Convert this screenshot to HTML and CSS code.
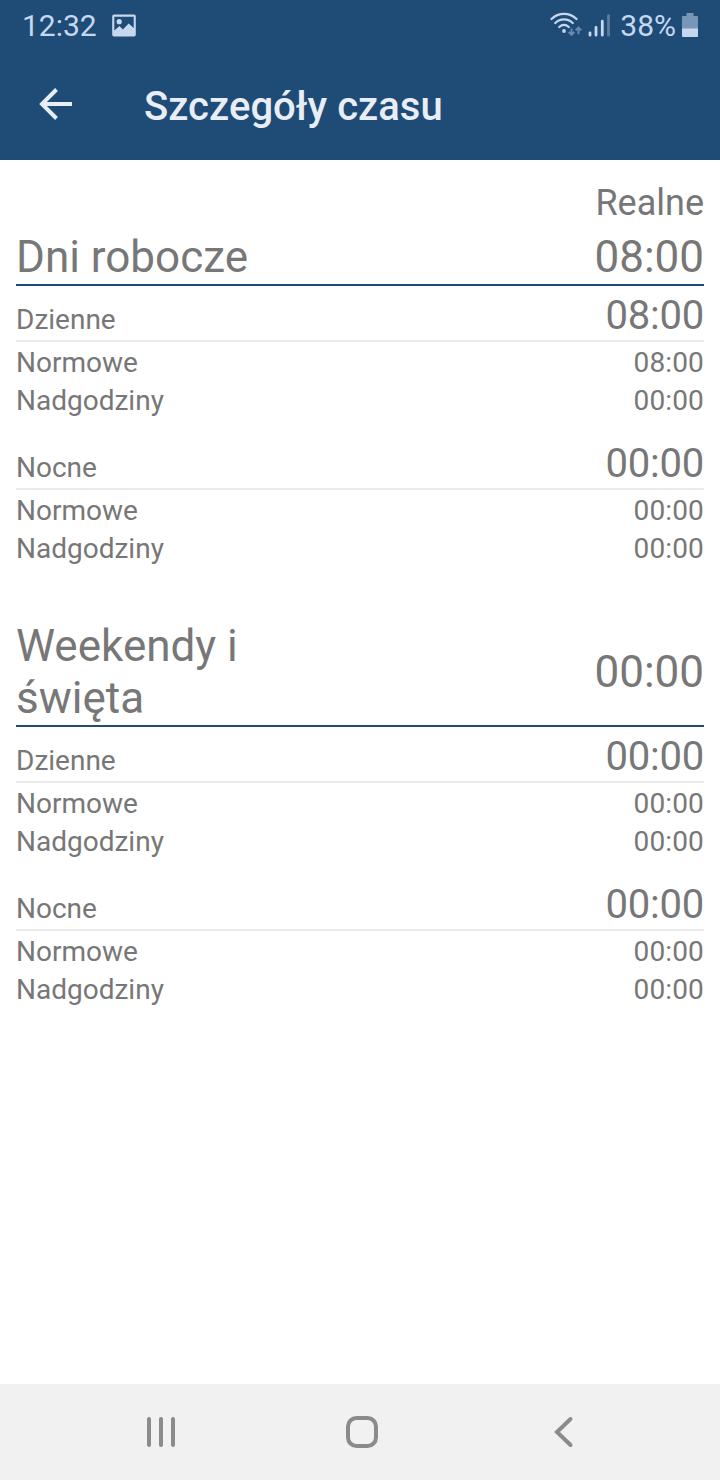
FILE: index.html
```html
<!DOCTYPE html>
<html lang="pl">
<head>
<meta charset="utf-8">
<title>Szczegóły czasu</title>
<link rel="stylesheet" href="styles.css">
</head>
<body>
<header class="top">
  <div class="status">
    <span class="clock">12:32</span>
    <svg class="photo" width="24" height="24" viewBox="0 0 24 24"><path fill="currentColor" fill-rule="evenodd" d="M2 .5h20A1.8 1.8 0 0 1 23.800 2.300v18.400a1.800 1.800 0 0 1-1.800 1.800H2a1.800 1.800 0 0 1-1.800-1.800V2.300A1.800 1.800 0 0 1 2 .5zM2.300 2.700V16.500l5.200-4.400 3.400 3.300 5.800-6 5 4.700V2.700zM7.200 5.100a2.600 2.600 0 1 1 0 5.200 2.600 2.600 0 0 1 0-5.200z"/></svg>
    <svg class="signals" width="62" height="30" viewBox="0 0 62 30">
      <g fill="none" stroke="currentColor" stroke-width="2.300" stroke-linecap="round">
        <path d="M1.500 9C8.500 2.200 19.500 2.200 26.500 9"/>
        <path d="M5.300 13c5-4.800 12.400-4.800 17.400 0"/>
        <path d="M9.200 17c3-2.600 6.600-2.600 9.600 0"/>
      </g>
      <circle cx="14" cy="21" r="1.900" fill="currentColor"/>
      <path class="dim-line" d="M21.500 18.500v6m-2.800-2.500 2.800 2.800 2.800-2.800M28.500 24.200v-6.500m-2.800 2.700 2.800-2.800 2.800 2.800"/>
      <path d="M40 22.800v2.400M46 17.300v7.900M52.300 11.200v14" stroke="currentColor" stroke-width="2.800" stroke-linecap="round"/>
      <path class="dim-bar" d="M58.500 5.700v19.500"/>
    </svg>
    <span class="percent">38%</span>
    <svg class="battery" width="16" height="24" viewBox="0 0 16 24"><path class="dim-fill" d="M4.500 0h7v3H15q1 0 1 1v12H0V4q0-1 1-1h3.500z"/><path fill="currentColor" d="M0 15.500h16V23q0 1-1 1H1q-1 0-1-1z"/></svg>
  </div>
  <div class="appbar">
    <svg class="back" width="34" height="34" viewBox="0 0 34 34"><path d="M33 17H4M17.500 2.500 3 17l14.500 14.500"/></svg>
    <h1 class="title">Szczegóły czasu</h1>
  </div>
</header>
<main class="content">
  <div class="column">Realne</div>
  <section class="block">
    <div class="head"><h2 class="name">Dni robocze</h2><span>08:00</span></div>
    <div class="group">
      <div class="sub"><span>Dzienne</span><span class="total">08:00</span></div>
      <div class="row"><span>Normowe</span><span class="time">08:00</span></div>
      <div class="row"><span>Nadgodziny</span><span class="time">00:00</span></div>
    </div>
    <div class="group">
      <div class="sub"><span>Nocne</span><span class="total">00:00</span></div>
      <div class="row"><span>Normowe</span><span class="time">00:00</span></div>
      <div class="row"><span>Nadgodziny</span><span class="time">00:00</span></div>
    </div>
  </section>
  <section class="block">
    <div class="head"><h2 class="name">Weekendy i święta</h2><span>00:00</span></div>
    <div class="group">
      <div class="sub"><span>Dzienne</span><span class="total">00:00</span></div>
      <div class="row"><span>Normowe</span><span class="time">00:00</span></div>
      <div class="row"><span>Nadgodziny</span><span class="time">00:00</span></div>
    </div>
    <div class="group">
      <div class="sub"><span>Nocne</span><span class="total">00:00</span></div>
      <div class="row"><span>Normowe</span><span class="time">00:00</span></div>
      <div class="row"><span>Nadgodziny</span><span class="time">00:00</span></div>
    </div>
  </section>
</main>
<nav class="navbar">
  <svg width="34" height="34" viewBox="0 0 34 34"><path d="M5 4v26M17 4v26M29 4v26"/></svg>
  <svg width="34" height="34" viewBox="0 0 34 34"><rect x="3" y="3" width="28" height="28" rx="8.500"/></svg>
  <svg width="34" height="34" viewBox="0 0 34 34"><path d="M24.500 4 11 17l13.500 13"/></svg>
</nav>
</body>
</html>
```

FILE: styles.css
```css
* { box-sizing: border-box; }
body {
  margin: 0;
  height: 1480px;
  display: flex;
  flex-direction: column;
  background: #fff;
  color: #777;
  font-family: Roboto, sans-serif;
}
h1, h2 { margin: 0; font-weight: 400; font-size: inherit; }
svg { display: block; flex: none; }
.top { height: 160px; background: #1f4b77; }
.status {
  height: 50px;
  padding: 0 22px;
  display: flex;
  align-items: center;
  color: #c6d8f0;
  font-size: 30px;
}
.clock, .percent { padding-top: 2px; line-height: 48px; }
.photo { margin-left: 15px; margin-top: 2px; }
.signals { margin-left: auto; }
.percent { margin-left: 8px; }
.battery { margin-left: 6px; }
.dim-line { fill: none; stroke: #688bad; stroke-width: 2; }
.dim-bar { stroke: #5b7da0; stroke-width: 2.8; stroke-linecap: round; }
.dim-fill { fill: #7897b6; }
.appbar {
  height: 110px;
  padding-left: 39px;
  display: flex;
  align-items: center;
  color: #e9eef6;
}
.back { margin-top: -2px; fill: none; stroke: #e9eef6; stroke-width: 4; }
.title {
  margin-left: 71px;
  padding-top: 4px;
  font-size: 40px;
  font-weight: 500;
  line-height: 48px;
  letter-spacing: 0.05px;
}
.content { flex: 1; padding: 21px 16px 0; }
.column { height: 50px; font-size: 36px; line-height: 45px; text-align: right; }
.block + .block { margin-top: 52px; }
.head {
  display: flex;
  justify-content: space-between;
  align-items: center;
  padding-bottom: 1px;
  border-bottom: 2px solid #1f4b77;
  font-size: 44px;
  line-height: 52px;
}
.name { width: 250px; }
.group + .group { margin-top: 14px; }
.sub {
  height: 56px;
  margin-bottom: 2px;
  padding-top: 6px;
  display: flex;
  justify-content: space-between;
  align-items: baseline;
  border-bottom: 2px solid #ebebeb;
  font-size: 28px;
}
.total { font-size: 40px; line-height: 47px; letter-spacing: -0.2px; }
.row {
  display: flex;
  justify-content: space-between;
  font-size: 28px;
  line-height: 38px;
}
.time { letter-spacing: 0.15px; }
.navbar {
  height: 96px;
  padding: 0 140px 0 144px;
  display: flex;
  justify-content: space-between;
  align-items: center;
  background: #f1f1f1;
}
.navbar svg { fill: none; stroke: #8b8b8b; stroke-width: 4; stroke-linecap: round; }
```
